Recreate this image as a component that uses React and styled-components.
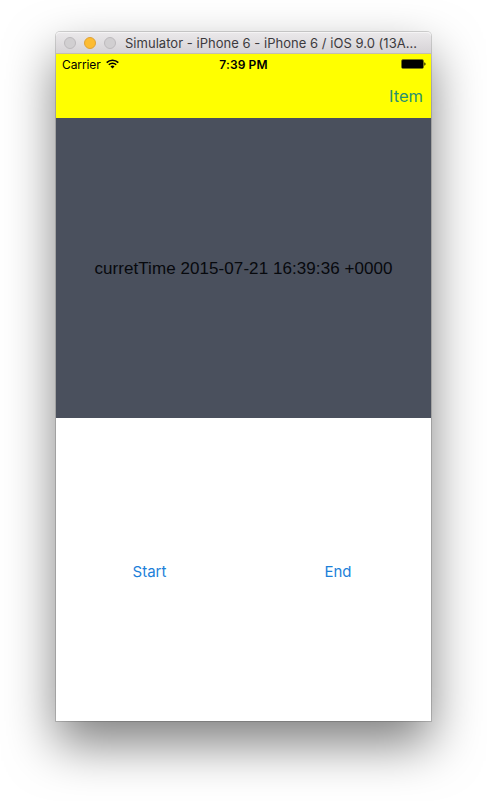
import React from "react";
import styled, { createGlobalStyle } from "styled-components";

const GlobalStyle = createGlobalStyle`
  * { box-sizing: border-box; }
  body { margin: 0; background: #fff; font-family: Inter, "Liberation Sans", sans-serif; }
`;

const Desktop = styled.main`
  height: 801px;
  padding: 32px 56px 80px;
  overflow: hidden;
`;

const SimulatorWindow = styled.section`
  width: 375px;
  height: 689px;
  display: flex;
  flex-direction: column;
  border-radius: 4px 4px 0 0;
  background: #fff;
  box-shadow: 0 0 0 1px rgba(0, 0, 0, 0.14), 0 0 1px rgba(0, 0, 0, 0.2), 0 23px 50px rgba(0, 0, 0, 0.5);
`;

const TitleBar = styled.header`
  height: 22px;
  flex: none;
  display: flex;
  align-items: center;
  padding-left: 8px;
  border-radius: 4px 4px 0 0;
  border-bottom: 1px solid #c5bfae;
  background: linear-gradient(#ebe9eb, #d6d3d6);
  box-shadow: inset 0 1px #f5f4f5;
`;

const WindowControls = styled.div`
  display: flex;
  gap: 8px;
`;

const ControlDot = styled.span`
  width: 12px;
  height: 12px;
  border-radius: 50%;
  border: 1px solid ${(p) => (p.$active ? "#dfa236" : "#bdbabd")};
  background: ${(p) => (p.$active ? "#fdbc32" : "#d1cfd1")};
`;

const WindowTitle = styled.h1`
  margin: 0 0 0 9px;
  font-size: 13px;
  font-weight: 400;
  line-height: 20px;
  letter-spacing: 0.03px;
  color: #3c3a3e;
  white-space: nowrap;
`;

const TopArea = styled.div`
  height: 64px;
  flex: none;
  background: #ff0;
`;

const StatusBar = styled.div`
  height: 20px;
  display: grid;
  grid-template-columns: 1fr auto 1fr;
  align-items: center;
  padding: 0 5px 0 5px;
  font-size: 12px;
  color: #000;
`;

const Carrier = styled.div`
  display: flex;
  align-items: center;
  gap: 5px;
  padding-left: 1px;
  letter-spacing: -0.1px;
`;

const Clock = styled.time`
  font-weight: 600;
  letter-spacing: 0.12px;
`;

const BatteryIcon = styled.svg`
  justify-self: end;
`;

const NavigationBar = styled.nav`
  height: 44px;
  display: flex;
  align-items: center;
  justify-content: flex-end;
  padding-right: 8px;
`;

const PlainButton = styled.button`
  padding: 0;
  border: 0;
  background: none;
  font: inherit;
  font-size: ${(p) => p.$size}px;
  line-height: 20px;
  color: ${(p) => p.$color};
`;

const TimePanel = styled.div`
  height: 300px;
  flex: none;
  display: flex;
  align-items: center;
  justify-content: center;
  padding-top: 2px;
  background: #4a505d;
  font: 17px/20px "Liberation Sans", Arial, sans-serif;
  letter-spacing: 0.07px;
  color: #07090d;
  white-space: nowrap;
`;

const Actions = styled.div`
  flex: 1;
  display: grid;
  grid-template-columns: 187px 190px;
  align-items: center;
  justify-items: center;
  padding-top: 4px;
`;

export default function App() {
  return (
    <>
      <GlobalStyle />
      <Desktop>
        <SimulatorWindow>
          <TitleBar>
            <WindowControls>
              <ControlDot />
              <ControlDot $active />
              <ControlDot />
            </WindowControls>
            <WindowTitle>Simulator - iPhone 6 - iPhone 6 / iOS 9.0 (13A...</WindowTitle>
          </TitleBar>
          <TopArea>
            <StatusBar>
              <Carrier>
                <span>Carrier</span>
                <svg width="13" height="10" viewBox="0 0 13 10" fill="none" stroke="#000" strokeWidth="1.6">
                  <path d="M.7 3.6a8.2 8.2 0 0 1 11.6 0M2.8 5.8a5.2 5.2 0 0 1 7.4 0" />
                  <path d="M4.5 7.4a2.8 2.8 0 0 1 4 0l-2 2z" fill="#000" stroke="none" />
                </svg>
              </Carrier>
              <Clock>7:39 PM</Clock>
              <BatteryIcon width="25" height="10" viewBox="0 0 25 10">
                <rect x=".5" y=".5" width="22" height="9" rx="1.5" fill="none" stroke="#77770c" />
                <rect x="1" y="1" width="21" height="8" rx=".5" />
                <path d="M23.4 3.3c1.5.4 1.5 3 0 3.4z" />
              </BatteryIcon>
            </StatusBar>
            <NavigationBar>
              <PlainButton $size={16.5} $color="#2a9070">Item</PlainButton>
            </NavigationBar>
          </TopArea>
          <TimePanel>curretTime 2015-07-21 16:39:36 +0000</TimePanel>
          <Actions>
            <PlainButton $size={15} $color="#1c7fd9">Start</PlainButton>
            <PlainButton $size={15} $color="#1c7fd9">End</PlainButton>
          </Actions>
        </SimulatorWindow>
      </Desktop>
    </>
  );
}
